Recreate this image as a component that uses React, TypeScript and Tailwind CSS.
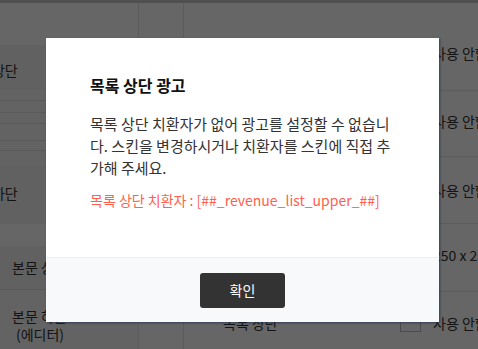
import React from 'react';

const font = { fontFamily: '"Noto Sans CJK KR", "Noto Sans", sans-serif' };

function Checkbox() {
  return <span className="inline-block w-[21px] h-[17px] border border-[#bbb] bg-white" />;
}

function OptionRow({ h, children }: { h: string; children: React.ReactNode }) {
  return (
    <div className={`${h} border-b border-[#e5e5e5] flex items-center gap-3 pl-[261px]`}>
      {children}
    </div>
  );
}

export default function App() {
  return (
    <div className="relative w-[478px] h-[349px] overflow-hidden bg-white text-[#333]" style={font}>
      {/* page behind the dialog */}
      <div className="h-[3px] bg-[#c8c8c8]" />
      <div className="flex">
        {/* label column */}
        <div className="w-[138px] shrink-0 flex flex-col text-[14px] text-[#333]">
          <div className="h-[42px]" />
          <div className="h-[45px] bg-[#f2f2f2] flex items-center pt-[6px] ml-[-37px]">목록 상단</div>
          <div className="h-[75px] flex flex-col bg-[#f7f7f7]">
            <div className="h-[10px]" />
            <div className="h-[12px] border-t border-[#e2e2e2]" />
            <div className="h-[11px] border-t border-[#e2e2e2]" />
            <div className="h-[17px] border-t border-[#e2e2e2]" />
            <div className="h-[10px] border-t border-[#e2e2e2]" />
            <div className="h-[15px] border-t border-[#e2e2e2]" />
          </div>
          <div className="h-[59px] flex items-center bg-[#f2f2f2] ml-[-37px] pb-[3px]">목록 하단</div>
          <div className="h-[22px]" />
          <div className="h-[44px] bg-[#f2f2f2] flex items-center pl-[12px] border-b border-[#e2e2e2]">본문 상단</div>
          <div className="h-[70px] bg-[#f7f7f7] flex flex-col justify-center pl-[12px] leading-[18px]">
            <span>본문 하단</span>
            <span className="pl-[4px]">(에디터)</span>
          </div>
        </div>
        {/* content column */}
        <div className="flex-1 border-l border-[#e5e5e5] relative">
          <div className="absolute left-[44px] top-0 bottom-0 border-l border-[#e5e5e5]" />
          <div className="text-[14px] text-[#333]">
            <OptionRow h="h-[88px]">
              <Checkbox />
              <span className="pt-[14px]">사용 안함</span>
            </OptionRow>
            <OptionRow h="h-[66px]">
              <Checkbox />
              <span className="pb-[4px]">사용 안함</span>
            </OptionRow>
            <OptionRow h="h-[67px]">
              <Checkbox />
              <span>사용 안함</span>
            </OptionRow>
            <div className="h-[68px] border-b border-[#e5e5e5] flex items-center pl-[294px] pb-[4px] whitespace-nowrap">
              <span>250 x 250</span>
            </div>
            <div className="h-[60px] flex items-center pt-[2px] whitespace-nowrap">
              <span className="w-[261px] shrink-0 pl-[84px]">목록 상단</span>
              <Checkbox />
              <span className="ml-3">사용 안함</span>
            </div>
          </div>
        </div>
      </div>

      {/* dim layer */}
      <div className="absolute inset-0 bg-black/60" />

      {/* dialog */}
      <div className="absolute left-[46px] top-[38px] w-[393px] bg-white shadow-[1px_1px_2px_rgba(30,50,80,0.7)]">
        <div className="h-[219px] px-[44px] pt-[35px]">
          <h2 className="text-[16px] font-bold text-[#111] leading-[24px]">목록 상단 광고</h2>
          <p className="mt-[16px] text-[15px] leading-[22px] text-[#333] break-all">
            목록 상단 치환자가 없어 광고를 설정할 수 없습니다. 스킨을 변경하시거나 치환자를 스킨에 직접 추가해 주세요.
          </p>
          <p className="mt-[10px] text-[14px] leading-[22px] text-[#ff5f4f]">목록 상단 치환자 : [##_revenue_list_upper_##]</p>
        </div>
        <div className="h-[65px] bg-[#f8f9fb] border-t border-[#eeeff2] flex items-center justify-center">
          <button className="w-[85px] h-[35px] rounded-[3px] bg-[#333] text-white text-[14px]">확인</button>
        </div>
      </div>
    </div>
  );
}
